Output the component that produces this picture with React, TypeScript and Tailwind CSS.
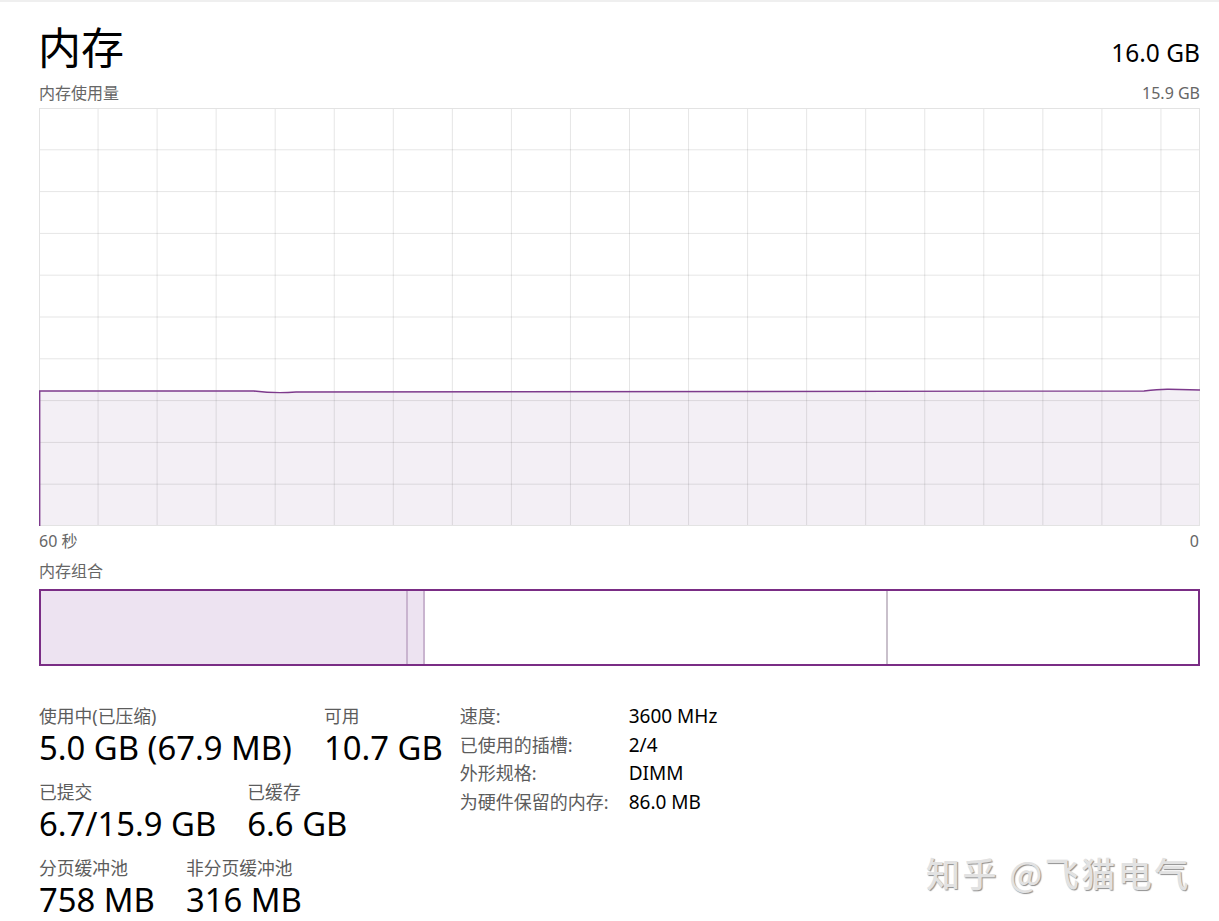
import React from 'react'

const W = 1161
const H = 418
const cols = Array.from({ length: 19 }, (_, i) => (i + 1) * 59.05)
const rows = Array.from({ length: 9 }, (_, i) => ((i + 1) * H) / 10)

const linePath = 'M0,283 L215,283 Q236,285.6 257,284 L1105,283 Q1120,281 1130,281.2 L1161,282'

const UsageGraph = () => {
  return (
    <svg width={W} height={H} viewBox={`0 0 ${W} ${H}`} className='block'>
      <rect x={0} y={0} width={W} height={H} fill='#ffffff' />
      <path d={`${linePath} L1161,418 L0,418 Z`} fill='#f3eff5' />
      {cols.map((x) => (
        <line key={'c' + x} x1={x} y1={0} x2={x} y2={H} stroke='rgba(0,0,0,0.1)' strokeWidth={1} />
      ))}
      {rows.map((y) => (
        <line key={'r' + y} x1={0} y1={y} x2={W} y2={y} stroke='rgba(0,0,0,0.1)' strokeWidth={1} />
      ))}
      <rect x={0.5} y={0.5} width={W - 1} height={H - 1} fill='none' stroke='#e3e3e3' strokeWidth={1} />
      <path d={linePath} fill='none' stroke='#7d3a8c' strokeWidth={1.4} />
      <line x1={0.7} y1={283} x2={0.7} y2={H} stroke='#7d3a8c' strokeWidth={1.4} />
    </svg>
  )
}

const Stat = ({ label, value }: { label: string; value: string }) => (
  <div className='flex flex-col'>
    <div className='text-[17.8px] leading-[24px] text-[#5c5c5c] whitespace-nowrap'>{label}</div>
    <div className='text-[32.8px] leading-[40px] text-black whitespace-nowrap'>{value}</div>
  </div>
)

const details = [
  ['速度:', '3600 MHz'],
  ['已使用的插槽:', '2/4'],
  ['外形规格:', 'DIMM'],
  ['为硬件保留的内存:', '86.0 MB'],
]

export default function App() {
  return (
    <div className="relative w-full min-h-screen bg-white border-t-2 border-[#efefef] pl-[39px] pr-[19px] font-['Noto_Sans','Noto_Sans_CJK_SC',sans-serif] overflow-hidden">
      <div className='flex justify-between items-start mt-[25px]'>
        <div className='text-[43px] leading-[42px] text-black -ml-[1px]'>内存</div>
        <div className='text-[24.5px] leading-[28px] text-black mt-[12px]'>16.0 GB</div>
      </div>

      <div className='flex justify-between mt-[14px] text-[16px] leading-[20px] text-[#666]'>
        <span>内存使用量</span>
        <span>15.9 GB</span>
      </div>

      <div className='mt-[5px]'>
        <UsageGraph />
      </div>

      <div className='flex justify-between mt-[5px] text-[16px] leading-[20px] text-[#666]'>
        <span>60 秒</span>
        <span className='pr-[1px]'>0</span>
      </div>

      <div className='mt-[10px] text-[16px] leading-[20px] text-[#666]'>内存组合</div>

      <div className='mt-[8px] h-[77px] border-2 border-[#7a2d85] flex'>
        <div className='w-[365px] bg-[#ede3f1]' />
        <div className='w-[17px] bg-[#ede3f1] border-l-2 border-[#c9b4cf]' />
        <div className='w-[463px] bg-white border-l-2 border-[#c9b4cf]' />
        <div className='flex-1 bg-white border-l-2 border-[#c9c0cb]' />
      </div>

      <div className='flex items-start mt-[38px] gap-[17px]'>
        <div className='flex flex-col'>
          <div className='flex gap-[32px]'>
            <Stat label='使用中(已压缩)' value='5.0 GB (67.9 MB)' />
            <Stat label='可用' value='10.7 GB' />
          </div>
          <div className='flex gap-[31px] mt-[12px]'>
            <Stat label='已提交' value='6.7/15.9 GB' />
            <Stat label='已缓存' value='6.6 GB' />
          </div>
          <div className='flex gap-[31px] mt-[12px]'>
            <Stat label='分页缓冲池' value='758 MB' />
            <Stat label='非分页缓冲池' value='316 MB' />
          </div>
        </div>

        <div className='-mt-[2px] grid grid-cols-[169px_auto] leading-[28.7px]'>
          {details.map(([k, v]) => (
            <React.Fragment key={k}>
              <div className='text-[18px] text-[#5c5c5c] whitespace-nowrap'>{k}</div>
              <div className='text-[19px] text-black whitespace-nowrap'>{v}</div>
            </React.Fragment>
          ))}
        </div>
      </div>

      <div className="absolute left-[926px] top-[851px] text-[34px] leading-[40px] tracking-[2.5px] font-medium text-[#e2e2e2] [text-shadow:1px_1px_1px_#8f8f8f] whitespace-nowrap font-['Noto_Sans_CJK_SC',sans-serif]">
        知乎 @飞猫电气
      </div>
    </div>
  )
}
